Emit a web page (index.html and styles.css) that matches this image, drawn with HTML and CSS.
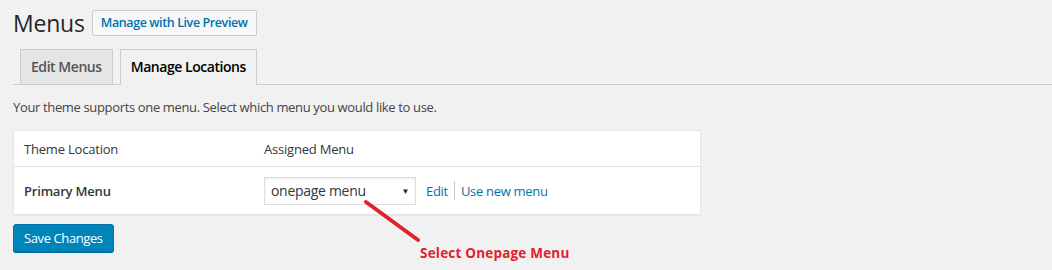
FILE: index.html
```html
<!DOCTYPE html>
<html lang="en">
<head>
    <meta charset="UTF-8">
    <title>Menus</title>
    <link rel="stylesheet" href="styles.css">
</head>
<body>
    <div class="wrap">
        <h1 class="page-title">Menus <a class="title-action" href="#">Manage with Live Preview</a></h1>

        <nav class="tabs">
            <a class="tab" href="#">Edit Menus</a>
            <a class="tab active" href="#">Manage Locations</a>
        </nav>

        <p class="intro">Your theme supports one menu. Select which menu you would like to use.</p>

        <table class="locations">
            <thead>
                <tr>
                    <th class="col-location">Theme Location</th>
                    <th>Assigned Menu</th>
                </tr>
            </thead>
            <tbody>
                <tr>
                    <td class="location-title">Primary Menu</td>
                    <td>
                        <div class="assign">
                            <div class="select">onepage menu <span class="caret">&#9660;</span></div>
                            <a href="#">Edit</a>
                            <span class="sep"></span>
                            <a href="#">Use new menu</a>
                        </div>
                    </td>
                </tr>
            </tbody>
        </table>

        <button class="save">Save Changes</button>
    </div>

    <!-- annotation drawn over the screenshot -->
    <svg class="note-arrow" width="64" height="50" viewBox="0 0 64 50">
        <line x1="6" y1="6" x2="58" y2="44" stroke="#e3202b" stroke-width="4" stroke-linecap="round"/>
    </svg>
    <div class="note-text">Select Onepage Menu</div>
</body>
</html>
```

FILE: styles.css
```css
body {
    margin: 0;
    background-color: #f1f1f1;
    color: #444;
    font-family: "Open Sans", "Noto Sans", sans-serif;
    font-size: 13px;
    position: relative;
    height: 270px;
    overflow: hidden;
}

a {
    color: #0073aa;
    text-decoration: none;
}

.wrap {
    padding: 10px 0 0 13px;
}

.page-title {
    display: flex;
    align-items: center;
    margin: 0;
    height: 26px;
    font-size: 23px;
    font-weight: 400;
    color: #23282d;
    letter-spacing: -0.2px;
}

.title-action {
    margin-left: 7px;
    height: 24px;
    line-height: 24px;
    padding: 0 8px;
    border: 1px solid #ccc;
    border-radius: 2px;
    background-color: #f7f7f7;
    font-size: 12.5px;
    font-weight: 600;
    letter-spacing: -0.4px;
}

.tabs {
    display: flex;
    gap: 7px;
    margin-top: 13px;
    padding-left: 7px;
    border-bottom: 1px solid #ccc;
}

.tab {
    height: 34px;
    line-height: 34px;
    padding: 0 10px;
    margin-bottom: -1px;
    border: 1px solid #ccc;
    border-bottom: none;
    background-color: #e5e5e5;
    color: #555;
    font-size: 14px;
    font-weight: 600;
    letter-spacing: -0.45px;
}

.tab.active {
    background-color: #f1f1f1;
    color: #000;
    height: 35px;
}

.intro {
    margin: 14px 0 0;
    line-height: 16px;
    letter-spacing: -0.35px;
}

.locations {
    margin-top: 15px;
    width: 688px;
    border-collapse: collapse;
    background-color: #fff;
    border: 1px solid #e5e5e5;
    box-shadow: 0 1px 1px rgba(0, 0, 0, 0.04);
}

.locations th {
    height: 35px;
    padding: 0 10px;
    text-align: left;
    font-weight: 400;
    color: #32373c;
    border-bottom: 1px solid #e1e1e1;
    letter-spacing: -0.2px;
}

.locations .col-location {
    width: 220px;
}

.locations td {
    height: 47px;
    padding: 0 10px;
    letter-spacing: -0.2px;
}

.location-title {
    font-weight: 600;
    color: #32373c;
    letter-spacing: -0.35px;
}

.assign {
    display: flex;
    align-items: center;
}

.select {
    width: 140px;
    height: 26px;
    line-height: 26px;
    padding: 0 4px 0 6px;
    margin-right: 10px;
    border: 1px solid #ddd;
    box-shadow: inset 0 1px 2px rgba(0, 0, 0, 0.07);
    font-size: 14px;
    color: #32373c;
    display: flex;
    justify-content: space-between;
    letter-spacing: -0.3px;
}

.caret {
    font-size: 8px;
    color: #222;
    padding-right: 2px;
}

.sep {
    width: 1px;
    height: 19px;
    background-color: #ccc;
    margin: 0 6px;
}

.assign a {
    letter-spacing: -0.3px;
}

.save {
    margin-top: 9px;
    height: 28px;
    padding: 0 10px;
    background-color: #0085ba;
    border: 1px solid #0073aa;
    border-radius: 3px;
    box-shadow: 0 1px 0 #006799;
    color: #fff;
    font-family: "Open Sans", "Noto Sans", sans-serif;
    font-size: 13px;
    letter-spacing: -0.4px;
}

.note-arrow {
    position: absolute;
    left: 360px;
    top: 196px;
}

.note-text {
    position: absolute;
    left: 420px;
    top: 245px;
    color: #e3202b;
    font-size: 13.5px;
    font-weight: 700;
    line-height: 16px;
    letter-spacing: 0.2px;
}
```
